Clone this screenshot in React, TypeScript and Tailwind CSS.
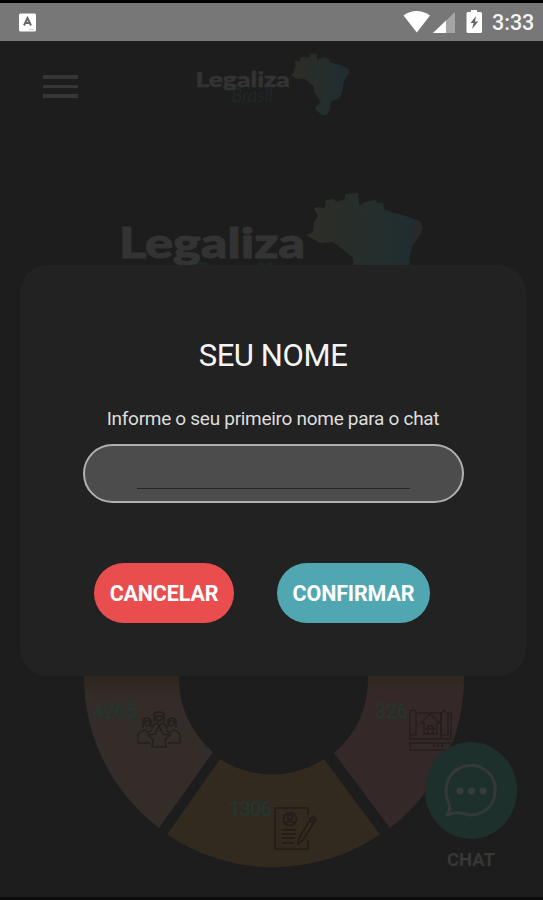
const BRAZIL =
  "M0 42 L7 39 L8 29 L12 23 L8 16 L11 14 L19 15 L20 7 L27 6 L31 9 L39 6 L39 1 L52 0 L53 12 L60 9 L69 7 L72 10 L77 10 L78 16 L88 20 L97 22 L105 25 L115 29 L117 35 L114 42 L107 52 L104 62 L103 75 L98 86 L89 91 L79 95 L79 107 L73 121 L63 121 L52 113 L49 107 L61 95 L53 84 L47 75 L47 65 L35 55 L27 49 L14 50 Z";

// Brand mark, drawn at header size and again at hero size
function Logo({ id, className }: { id: string; className: string }) {
  return (
    <svg viewBox="0 0 304 124" className={className}>
      <defs>
        <linearGradient id={id} x1="0" y1="0" x2="1" y2="0.1">
          <stop offset="0" stopColor="#2e2e24" />
          <stop offset="0.3" stopColor="#292d29" />
          <stop offset="0.65" stopColor="#252e2d" />
          <stop offset="0.92" stopColor="#202d31" />
          <stop offset="1" stopColor="#2d2628" />
        </linearGradient>
      </defs>
      <text
        x="70"
        y="97"
        textLength="82"
        lengthAdjust="spacingAndGlyphs"
        className="fill-[#1e2828] font-['Lato',sans-serif] text-[37px] italic"
      >
        Brasil
      </text>
      <text
        x="-1"
        y="66"
        textLength="186"
        lengthAdjust="spacingAndGlyphs"
        strokeWidth="1"
        className="fill-[#333333] stroke-[#333333] font-['Lato',sans-serif] text-[42px] font-black"
      >
        Legaliza
      </text>
      <path d={BRAZIL} transform="translate(186 1)" fill={`url(#${id})`} />
    </svg>
  );
}

function StatusBar() {
  return (
    <div className="flex h-[41px] items-center justify-between border-t-[3px] border-black bg-[#777777] pl-[19px] pr-[8px]">
      <svg viewBox="0 0 18 19" className="h-[19px] w-[18px]">
        <rect x="0" y="0.5" width="17" height="18" rx="1.5" fill="#fff" />
        <path d="M5 12.5 L8.5 5 L12 12.5 M6.4 10 H10.6" fill="none" stroke="#686868" strokeWidth="2" />
        <path d="M10 16.5 H15" stroke="#cfcfcf" />
      </svg>
      <div className="flex items-center">
        <svg viewBox="0 0 82 25" className="h-[25px] w-[82px]">
          <path d="M0.5 5.5 C8 -0.5 19 -0.5 27 5.5 L13.8 22.5 Z" fill="#fff" />
          <path d="M30 23 L52 2 V23 Z" fill="#a5a5a5" />
          <path d="M30 23 L43 10.6 V23 Z" fill="#fff" />
          <path
            d="M68 0 H74 V2 H77.5 Q79 2 79 3.5 V21.5 Q79 23 77.5 23 H65 Q63.5 23 63.5 21.5 V3.5 Q63.5 2 65 2 H68 Z"
            fill="#fff"
          />
          <path d="M73 6 L67.5 13 H70.5 L69 19 L75.2 11.5 H72 Z" fill="#666" />
        </svg>
        <span className="ml-[7px] mt-[2px] block w-[43px] whitespace-nowrap font-['Roboto',sans-serif] text-[21.5px] font-medium leading-none text-[#f4f4f4]">
          3:33
        </span>
      </div>
    </div>
  );
}

function Header() {
  return (
    <header className="flex h-[96px] items-start border-b border-[#1b1b1b] pl-[43px]">
      <div className="mt-[34px] flex w-[35px] flex-col gap-[6px]">
        <span className="h-[4px] bg-[#363636]" />
        <span className="h-[3px] bg-[#363636]" />
        <span className="h-[4px] bg-[#363636]" />
      </div>
      <Logo id="header-map" className="ml-[118px] mt-[12px] h-[63px] w-[154px]" />
    </header>
  );
}

function Donut() {
  return (
    <svg viewBox="84 488 380 382" className="h-[382px] w-[380px]">
      <defs>
        <linearGradient id="left-slice" x1="0" y1="676" x2="0" y2="700" gradientUnits="userSpaceOnUse">
          <stop offset="0" stopColor="#2d261f" />
          <stop offset="1" stopColor="#332c28" />
        </linearGradient>
        <linearGradient id="right-slice" x1="0" y1="676" x2="0" y2="692" gradientUnits="userSpaceOnUse">
          <stop offset="0" stopColor="#2f271f" />
          <stop offset="1" stopColor="#342928" />
        </linearGradient>
      </defs>
      <path d="M84 670 V678 A190 190 0 0 0 159 828 L213 752 A95 95 0 0 1 179 678 V670 Z" fill="url(#left-slice)" />
      <path d="M167 834.5 A190 190 0 0 0 380 834.5 L324 759 A95 95 0 0 1 220 759 Z" fill="#32291f" />
      <path d="M334 753 L390 828 A190 190 0 0 0 464 678 V670 H368 V678 A95 95 0 0 1 334 753 Z" fill="url(#right-slice)" />
      <g strokeWidth="0.4" className="fill-[#25372f] stroke-[#25372f] font-['Roboto',sans-serif] text-[20px]">
        <text x="93" y="717.5" textLength="44">4265</text>
        <text x="229" y="816" textLength="43">1306</text>
        <text x="375" y="717.5" textLength="33">326</text>
      </g>
      {/* people */}
      <g fill="none" stroke="#241f1d" strokeWidth="1.4" strokeLinejoin="round">
        <path d="M154 722 V715 Q154 712 159 712 Q164 712 164 715 V722 M156 716 H162 V719 Q159 723 156 719 Z" />
        <path d="M143 728 V720 Q147 716 151 720 V727 M145 721 H150 V724 Q147 728 145 724 Z" />
        <path d="M168 727 V720 Q172 716 176 720 V728 M169 721 H174 V724 Q172 728 169 724 Z" />
        <path d="M152 729 Q153 724 157 723 L159 726 L162 723 Q166 724 167 729" />
        <path d="M138 743 V735 Q139 731 145 730 L148 733 L152 730 M138 743 H151" />
        <path d="M180 743 V735 Q179 731 173 730 L170 733 L166 730 M180 743 H168" />
        <path d="M159 726 L163 734 L170 735 L165 740 L166 747 H152 L153 740 L148 735 L155 734 Z" />
      </g>
      {/* blueprint */}
      <g fill="none" stroke="#261f1e" strokeWidth="1.4">
        <path d="M416 713 H441 V739 H410 V713 Q410 710 413 710 Q416 710 416 713 V735 Q410 733 410 739" />
        <path d="M441 714 L444 710 L448 714 V735 H441 Z M448 713 H451 V739 H441" />
        <path d="M421 723 L430 714 L440 723 H437 V734 H424 V723 Z M428 734 V726 H433 V734 M425 729 H436" />
        <path d="M410 743 H451 V750 H410 Z M434 743 V747 M438 743 V747 M442 743 V747" />
      </g>
      {/* form and pencil */}
      <g fill="none" stroke="#231d18" strokeWidth="1.5">
        <path d="M308 815 V808 H275 V849 H308 V840" />
        <circle cx="290" cy="819" r="6.5" />
        <circle cx="290" cy="817" r="2.5" />
        <path d="M285 824 Q290 818 295 824 M282 830 H296 M282 834 H296 M282 838 H295 M282 843 H294" />
        <path d="M299 838 L311 818 L315 821 L303 840 L298 844 Z M309 820 L313 823 M311 818 L313 816 L316 819 L315 821" />
      </g>
    </svg>
  );
}

function ChatButton() {
  return (
    <button className="absolute left-[425px] top-[742px] flex w-[92px] flex-col items-center">
      <span className="flex h-[97px] w-[92px] items-center justify-center rounded-[50%] bg-[#1e302c]">
        <svg viewBox="0 0 54 54" className="h-[54px] w-[54px]">
          <path
            d="M3 51 Q7 47 5 40 C-2 25 4 9 16 4 C34 -4 53 9 51 28 C50 46 33 55 17 49 Q10 48 3 51 Z"
            fill="none"
            stroke="#35393b"
            strokeWidth="3"
            strokeLinejoin="round"
          />
          <g fill="#383b3d">
            <circle cx="16" cy="27" r="3.6" />
            <circle cx="27.5" cy="27" r="3.6" />
            <circle cx="39" cy="27" r="3.6" />
          </g>
        </svg>
      </span>
      <span className="mt-[11px] font-['Roboto',sans-serif] text-[18.5px] font-bold leading-[20px] text-[#373737]">
        CHAT
      </span>
    </button>
  );
}

function NameDialog() {
  return (
    <div
      role="dialog"
      className="absolute left-[20px] top-[265px] flex h-[411px] w-[506px] flex-col items-center rounded-[27px] bg-[#222222] font-['Roboto',sans-serif]"
    >
      <h1 className="mt-[73px] text-[31px] leading-[36px] tracking-[-0.4px] text-[#f5f5f5]">SEU NOME</h1>
      <p className="mt-[33px] whitespace-nowrap text-[19px] leading-[24px] tracking-[-0.29px] text-[#dedede]">
        Informe o seu primeiro nome para o chat
      </p>
      <div className="mt-[13px] flex h-[59px] w-[381px] items-end justify-center rounded-full border-2 border-[#b0b0b0] bg-[#4c4c4c]">
        <input
          aria-label="Nome"
          className="mb-[12px] h-[30px] w-[273px] border-b border-[#252525] bg-transparent text-white outline-none"
        />
      </div>
      <div className="mr-[22px] mt-[60px] flex gap-[43px] text-[21.5px] font-bold tracking-[-0.15px] text-white">
        <button className="h-[60px] w-[140px] rounded-full bg-[#e94d4e] pt-[2px]">CANCELAR</button>
        <button className="h-[60px] w-[153px] rounded-full bg-[#51a7b1] pt-[2px]">CONFIRMAR</button>
      </div>
    </div>
  );
}

export default function App() {
  return (
    <div className="relative h-[900px] w-[543px] overflow-hidden bg-[#1d1d1d]">
      <StatusBar />
      <Header />
      <main className="flex flex-col">
        <Logo id="hero-map" className="ml-[120px] mt-[55px] h-[124px] w-[304px]" />
        <div className="ml-[84px] mt-[172px]">
          <Donut />
        </div>
      </main>
      <ChatButton />
      <NameDialog />
      <div className="absolute inset-x-0 bottom-0 h-[3px] bg-[#0c0c0c]" />
    </div>
  );
}
